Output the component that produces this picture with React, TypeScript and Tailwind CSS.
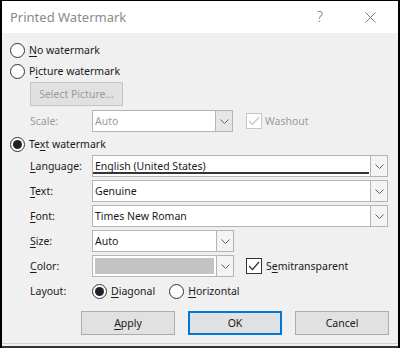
import React from "react";

const font = { fontFamily: '"Noto Sans", "Open Sans", sans-serif' };

function U({ children }: { children: React.ReactNode }) {
  return <span className="underline underline-offset-2 decoration-1">{children}</span>;
}

function Chevron({ color = "#606060" }: { color?: string }) {
  return (
    <svg width="9" height="5" viewBox="0 0 9 5" fill="none">
      <path d="M0.5 0.5 L4.5 4.5 L8.5 0.5" stroke={color} strokeWidth="1" />
    </svg>
  );
}

function Radio({ checked = false }: { checked?: boolean }) {
  return (
    <span className="flex h-[15px] w-[15px] shrink-0 items-center justify-center rounded-full border border-[#333] bg-white">
      {checked && <span className="h-[9px] w-[9px] rounded-full bg-[#222]" />}
    </span>
  );
}

function Check({ disabled = false }: { disabled?: boolean }) {
  const c = disabled ? "#c6c6c6" : "#333";
  return (
    <span
      className={`flex h-[16px] w-[16px] shrink-0 items-center justify-center border bg-white ${
        disabled ? "border-[#c6c6c6]" : "border-[#333]"
      }`}
    >
      <svg width="12" height="10" viewBox="0 0 12 10" fill="none">
        <path d="M1 5 L4.5 8.5 L11 1" stroke={c} strokeWidth="1.2" />
      </svg>
    </span>
  );
}

function Combo({
  value,
  width,
  disabled = false,
  focused = false,
  swatch = false,
}: {
  value?: string;
  width: string;
  disabled?: boolean;
  focused?: boolean;
  swatch?: boolean;
}) {
  return (
    <div className={`flex h-[22px] ${width} border border-[#b4b4b4] bg-white`}>
      <div className="relative flex flex-1 items-center px-[2px]">
        {swatch ? (
          <div className="h-[16px] w-full bg-[#c3c3c3]" />
        ) : (
          <span className={disabled ? "text-[#9b9b9b]" : "text-[#1a1a1a]"}>{value}</span>
        )}
        {focused && <div className="absolute bottom-[2px] left-0 right-[1px] h-[2px] bg-[#333]" />}
      </div>
      <div
        className={`flex w-[17px] items-center justify-center border-l border-[#b4b4b4] ${
          disabled ? "bg-[#e6e6e6]" : "bg-[#f4f4f4]"
        }`}
      >
        <Chevron />
      </div>
    </div>
  );
}

function Row({ label, children }: { label: React.ReactNode; children: React.ReactNode }) {
  return (
    <div className="flex h-[22px] items-center">
      <div className="w-[82px] shrink-0 pl-[20px] text-[#1a1a1a]">{label}</div>
      {children}
    </div>
  );
}

function Btn({ children, primary = false }: { children: React.ReactNode; primary?: boolean }) {
  return (
    <div
      className={`flex h-[24px] w-[94px] items-center justify-center bg-[#e1e1e1] text-[#1a1a1a] ${
        primary ? "border-2 border-[#0078d7]" : "border border-[#adadad]"
      }`}
    >
      {children}
    </div>
  );
}

export default function App() {
  return (
    <div
      style={font}
      className="flex h-[348px] w-[400px] flex-col overflow-hidden border-x-2 border-t border-black bg-[#f0f0f0] text-[10.5px] leading-none"
    >
      <div className="flex h-[32px] shrink-0 items-center bg-white pl-[8px] pr-[22px] text-[13px] text-[#8a8a8a]">
        <span className="flex-1">Printed Watermark</span>
        <span className="mr-[42px] text-[14px] font-light text-[#777]">?</span>
        <svg width="11" height="11" viewBox="0 0 11 11">
          <path d="M0.5 0.5 L10.5 10.5 M10.5 0.5 L0.5 10.5" stroke="#777" strokeWidth="1" />
        </svg>
      </div>

      <div className="flex flex-1 flex-col pl-[8px] pt-[7px]">
        <div className="flex h-[21px] items-center gap-[4px]">
          <Radio />
          <span className="text-[#1a1a1a]">
            <U>N</U>o watermark
          </span>
        </div>
        <div className="flex h-[21px] items-center gap-[4px]">
          <Radio />
          <span className="text-[#1a1a1a]">
            P<U>i</U>cture watermark
          </span>
        </div>
        <div className="ml-[20px] flex h-[24px] w-[93px] items-center justify-center border border-[#c3c3c3] bg-[#e1e1e1] text-[#9b9b9b]">
          Select Picture...
        </div>
        <div className="mt-[4px] flex h-[22px] items-center">
          <div className="w-[82px] shrink-0 pl-[20px] text-[#9b9b9b]">Scale:</div>
          <Combo value="Auto" width="w-[141px]" disabled />
          <div className="ml-[13px] flex items-center gap-[3px] text-[#9b9b9b]">
            <Check disabled />
            Washout
          </div>
        </div>
        <div className="mt-[1px] flex h-[22px] items-center gap-[4px]">
          <Radio checked />
          <span className="text-[#1a1a1a]">
            Te<U>x</U>t watermark
          </span>
        </div>

        <div className="flex flex-col gap-[3px]">
          <Row label={<><U>L</U>anguage:</>}>
            <Combo value="English (United States)" width="w-[296px]" focused />
          </Row>
          <Row label={<><U>T</U>ext:</>}>
            <Combo value="Genuine" width="w-[296px]" />
          </Row>
          <Row label={<><U>F</U>ont:</>}>
            <Combo value="Times New Roman" width="w-[296px]" />
          </Row>
          <Row label={<><U>S</U>ize:</>}>
            <Combo value="Auto" width="w-[142px]" />
          </Row>
          <Row label={<><U>C</U>olor:</>}>
            <Combo width="w-[142px]" swatch />
            <div className="ml-[12px] flex items-center gap-[4px] text-[#1a1a1a]">
              <Check />
              <span>
                S<U>e</U>mitransparent
              </span>
            </div>
          </Row>
          <Row label="Layout:">
            <div className="flex items-center gap-[4px] text-[#1a1a1a]">
              <Radio checked />
              <span>
                <U>D</U>iagonal
              </span>
            </div>
            <div className="ml-[14px] flex items-center gap-[4px] text-[#1a1a1a]">
              <Radio />
              <span>
                <U>H</U>orizontal
              </span>
            </div>
          </Row>
        </div>

        <div className="mt-[9px] flex gap-[13px] pl-[71px]">
          <Btn>
            <U>A</U>pply
          </Btn>
          <Btn primary>OK</Btn>
          <Btn>Cancel</Btn>
        </div>
      </div>
      <div className="h-[1px] bg-[#d0d0d0]" />
      <div className="h-[2px] bg-[#f0f0f0]" />
      <div className="h-[2px] bg-[#333]" />
    </div>
  );
}
